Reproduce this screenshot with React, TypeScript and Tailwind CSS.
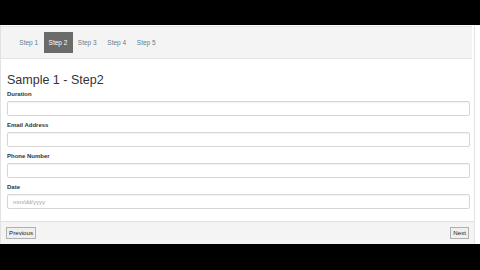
const steps = ['Step 1', 'Step 2', 'Step 3', 'Step 4', 'Step 5'];

const fields = [
  { label: 'Duration', placeholder: '' },
  { label: 'Email Address', placeholder: '' },
  { label: 'Phone Number', placeholder: '' },
  { label: 'Date', placeholder: 'mm/dd/yyyy' },
];

function Field({ label, placeholder }: { label: string; placeholder: string }) {
  return (
    <div className="flex flex-col">
      <label className="h-[8px] text-[6px] leading-[8px] font-bold text-[#333]">{label}</label>
      <div className="mt-[3px] h-[15px] rounded-[2px] border border-[#d6d6d6] bg-white shadow-[inset_0_1px_1px_rgba(0,0,0,0.05)] flex items-center pl-[5px]">
        <span className="text-[6px] leading-none text-[#a0a0a0]">{placeholder}</span>
      </div>
    </div>
  );
}

export default function App() {
  return (
    <div
      className="w-[480px] h-[270px] bg-black flex flex-col overflow-hidden"
      style={{ fontFamily: '"Liberation Sans", Arial, sans-serif' }}
    >
      <div className="h-[25px] shrink-0" />
      <div className="flex-1 bg-white flex">
        <div className="w-[475px] flex flex-col border-l border-r border-[#e2e2e2]">
          {/* wizard tabs */}
          <div className="h-[33px] mt-[1px] mr-[2px] bg-[#f4f4f4] border-t border-b border-[#e4e4e4] flex items-center pl-[13px]">
            {steps.map((s, i) => (
              <div
                key={s}
                className={
                  i === 1
                    ? 'w-[29px] h-[21px] flex items-center justify-center bg-[#6b6b6b] text-white text-[6.5px]'
                    : 'w-[29.5px] h-[21px] flex items-center justify-center text-[#5f7f93] text-[6.5px]'
                }
              >
                {s}
              </div>
            ))}
          </div>

          {/* body */}
          <div className="flex-1 flex flex-col pl-[6px] pr-[4px]">
            <h1 className="mt-[14px] text-[12.5px] leading-[15px] text-[#333] font-normal">Sample 1 - Step2</h1>
            <div className="mt-[2px] flex flex-col gap-[5px]">
              {fields.map((f) => (
                <Field key={f.label} label={f.label} placeholder={f.placeholder} />
              ))}
            </div>
          </div>

          {/* footer */}
          <div className="h-[23px] bg-[#f4f4f4] border-t border-[#e0e0e0] flex items-center justify-between pl-[5px] pr-[5px]">
            <button className="h-[12px] px-[2px] border border-[#b0b0b0] bg-[#efefef] text-[6.2px] leading-none text-[#222]">
              Previous
            </button>
            <button className="h-[12px] px-[2px] border border-[#b0b0b0] bg-[#efefef] text-[6.2px] leading-none text-[#222]">
              Next
            </button>
          </div>
        </div>
      </div>
      <div className="h-[26px] shrink-0" />
    </div>
  );
}
